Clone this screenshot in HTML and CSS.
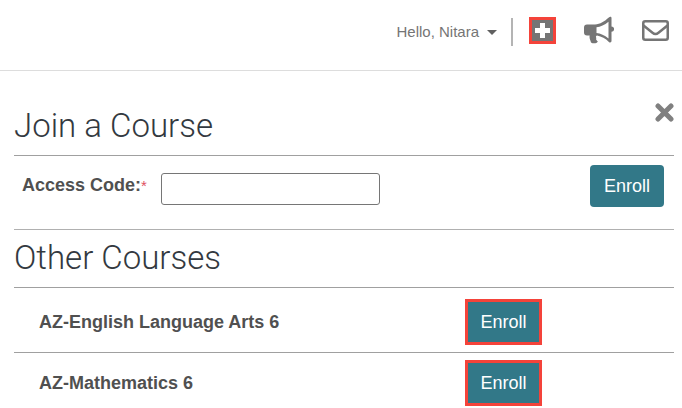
FILE: index.html
```html
<!DOCTYPE html>
<html lang="en">
<head>
    <meta charset="UTF-8">
    <meta name="viewport" content="width=device-width, initial-scale=1">

    <title>Join a Course</title>

    <link rel="stylesheet" href="styles.css">
</head>
<body>
<header class="topbar">
    <button class="user-menu" type="button">Hello, Nitara <span class="caret"></span></button>

    <nav class="actions">
        <button class="icon-button add highlight" type="button" aria-label="Join a course">
            <svg width="21" height="21" viewBox="0 0 21 21">
                <path fill="#757575" d="M0 0h21v21H0z"/>
                <path fill="#fff" d="M8 3h5v5h5v5h-5v5H8v-5H3V8h5z"/>
            </svg>
        </button>
        <button class="icon-button" type="button" aria-label="Announcements">
            <svg width="30" height="28" viewBox="0 0 30 28">
                <path fill="#757575" fill-rule="evenodd" d="M27.500 2v8.600a2.600 2.600 0 0 1 0 5.200V25c0 1.500-1.500 1.800-2.600.9C21.500 22.500 17.500 20.400 13 19.500c-1.300.5-1.300 1.700-.6 2.600-.8 1.300.2 2.400 1.500 3.400-1.200 2.300-5.100 2.300-6.900.9-.8-2.500-1.900-4.500-1.300-7H3a3 3 0 0 1-3-3v-5a3 3 0 0 1 3-3h8c5.200 0 9.600-3.200 13.800-6.900 1.200-1 2.700-1 2.700.5zm-3 3.700c-3.900 3.200-8 5-12 5.500v5.800c4 .5 8.100 2.300 12 5.500z"/>
            </svg>
        </button>
        <button class="icon-button" type="button" aria-label="Messages">
            <svg width="27" height="21" viewBox="0 0 27 21">
                <rect x="1.250" y="1.250" width="24.500" height="18.500" rx="2" fill="none" stroke="#757575" stroke-width="2.500"/>
                <path d="M1.500 5.500 10.500 12.800q3 2.400 6 0L25.500 5.500" fill="none" stroke="#757575" stroke-width="2.500"/>
            </svg>
        </button>
    </nav>
</header>

<main class="panel">
    <section>
        <div class="panel-head">
            <h1>Join a Course</h1>
            <button class="icon-button" type="button" aria-label="Close">
                <svg width="19" height="19" viewBox="0 0 19 19">
                    <path d="M3 3l13 13M16 3L3 16" stroke="#808080" stroke-width="5" stroke-linecap="round"/>
                </svg>
            </button>
        </div>

        <form class="join-form">
            <label for="access-code">Access Code:<span class="required">*</span></label>
            <input id="access-code" type="text" name="access-code" required>
            <button class="enroll" type="submit">Enroll</button>
        </form>
    </section>

    <section>
        <h2>Other Courses</h2>

        <ul class="courses">
            <li>
                <span class="course-name">AZ-English Language Arts 6</span>
                <div class="course-action">
                    <button class="enroll highlight" type="button">Enroll</button>
                </div>
            </li>
            <li>
                <span class="course-name">AZ-Mathematics 6</span>
                <div class="course-action">
                    <button class="enroll highlight" type="button">Enroll</button>
                </div>
            </li>
        </ul>
    </section>
</main>
</body>
</html>
```
FILE: styles.css
```css
* {
    box-sizing: border-box;
}

body {
    margin: 0;

    font-family: "Liberation Sans", Arial, sans-serif;
    font-size: 18px;
    line-height: 24px;
    color: #505050;
    background-color: #ffffff;
}

button {
    font: inherit;
    cursor: pointer;
}

.topbar {
    display: flex;
    justify-content: flex-end;
    align-items: flex-start;
    height: 71px;
    padding: 16px 13px 0 16px;
    border-bottom: 1px solid #dddddd;
}

.user-menu {
    display: flex;
    align-items: center;
    gap: 8px;
    height: 28px;
    margin-top: 2px;
    padding: 0 14px 0 0;

    font-size: 15px;
    color: #757575;
    border: 0;
    border-right: 2px solid #b4b4b4;
    background: none;
}

.caret {
    border: 5px solid transparent;
    border-top-color: #606060;
    border-bottom: 0;
}

.actions {
    display: flex;
    align-items: center;
    gap: 28px;
    height: 28px;
    margin-left: 16px;
}

.icon-button {
    display: flex;
    padding: 0;
    border: 0;
    background: none;
}

.highlight {
    border: 3px solid #f4433a;
    border-radius: 0;
}

.panel {
    padding: 28px 8px 0 14px;
}

.panel-head {
    display: flex;
    justify-content: space-between;
    align-items: flex-start;
    padding-top: 4px;
    border-bottom: 1px solid #a0a0a0;
}

h1,
h2 {
    margin: 0;

    font-family: Roboto, sans-serif;
    font-weight: 300;
    font-size: 33px;
    line-height: 46px;
    color: #333940;
}

h1 {
    padding-bottom: 6px;
}

h2 {
    padding: 5px 0 6px;
}

.join-form {
    display: flex;
    align-items: center;
    height: 74px;
    padding: 0 10px 14px 8px;
    border-bottom: 1px solid #b0b0b0;
}

.join-form label {
    font-weight: bold;
}

.required {
    font-size: 15px;
    font-weight: normal;
    color: #e05060;
}

.join-form input {
    width: 219px;
    height: 32px;
    margin: 6px auto 0 14px;
    padding: 0 8px;

    font: inherit;
    border: 1px solid #767676;
    border-radius: 3px;
}

.enroll {
    width: 74px;
    height: 42px;
    padding: 0;

    color: #ffffff;
    border: 0;
    border-radius: 4px;
    background-color: #327888;
}

.courses {
    margin: 0;
    padding: 0;
    list-style: none;
}

.courses li {
    display: flex;
    align-items: center;
    height: 61px;
    padding-left: 25px;
    border-top: 1px solid #a0a0a0;
}

.courses li:first-child {
    height: 65px;
    padding-top: 4px;
}

.course-name {
    flex: 1;
    font-weight: bold;
}

.course-action {
    width: 209px;
}

.enroll.highlight {
    width: 77px;
    height: 46px;
    border: 3px solid #f4433a;
    border-radius: 0;
}
```
